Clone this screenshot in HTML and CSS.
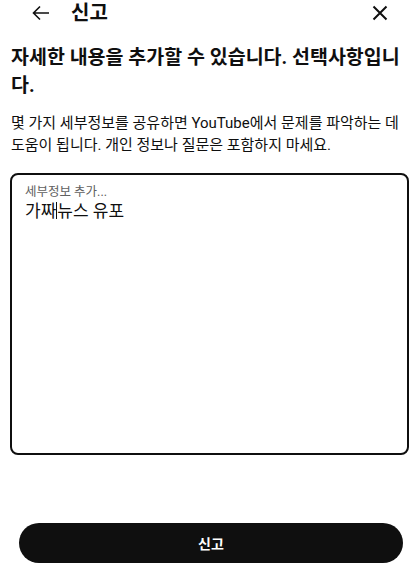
FILE: index.html
```html
<!DOCTYPE html>
<html lang="ko">
<head>
  <meta charset="UTF-8" />
  <title>신고</title>
  <link rel="stylesheet" href="styles.css">
</head>
<body>

  <header class="topbar">
    <button class="icon-btn back" aria-label="뒤로">
      <svg width="20" height="20" viewBox="0 0 20 20" fill="none" stroke="#0f0f0f" stroke-width="1.6">
        <path d="M18 10H2.5M9 3.5L2.5 10L9 16.5" />
      </svg>
    </button>
    <h1 class="title">신고</h1>
    <button class="icon-btn close" aria-label="닫기">
      <svg width="16" height="16" viewBox="0 0 16 16" fill="none" stroke="#0f0f0f" stroke-width="2">
        <path d="M1.5 1.5L14.5 14.5M14.5 1.5L1.5 14.5" />
      </svg>
    </button>
  </header>

  <main class="content">
    <h2 class="heading">자세한 내용을 추가할 수 있습니다. 선택사항입니다.</h2>
    <p class="desc">몇 가지 세부정보를 공유하면 YouTube에서 문제를 파악하는 데 도움이 됩니다. 개인 정보나 질문은 포함하지 마세요.</p>

    <div class="details-box">
      <div class="details-label">세부정보 추가...</div>
      <div class="details-text">가짜<span class="caret"></span>뉴스 유포</div>
    </div>
  </main>

  <footer class="actions">
    <button class="submit">신고</button>
  </footer>

</body>
</html>
```

FILE: styles.css
```css
* {
  box-sizing: border-box;
}

body {
  font-family: Roboto, "Noto Sans CJK KR", sans-serif;
  margin: 0;
  padding: 0;
  background: #fff;
  color: #0f0f0f;
  width: 417px;
  height: 571px;
  overflow: hidden;
}

.topbar {
  display: flex;
  align-items: center;
  height: 26px;
  padding: 0 29px 0 31px;
}

.icon-btn {
  display: flex;
  align-items: center;
  justify-content: center;
  border: none;
  background: none;
  padding: 0;
  cursor: pointer;
}

.title {
  margin: 0 0 0 20px;
  font-size: 20px;
  font-weight: 700;
  line-height: 26px;
  flex: 1;
}

.content {
  padding: 0 8px 0 11px;
}

.heading {
  margin: 18px 0 0;
  font-size: 19.5px;
  font-weight: 700;
  line-height: 28px;
}

.desc {
  margin: 12px 0 0;
  font-size: 15px;
  line-height: 22px;
}

.details-box {
  margin: 17px 0 0 -1px;
  height: 282px;
  border: 2px solid #0f0f0f;
  border-radius: 8px;
  padding: 9px 13px;
}

.details-label {
  font-size: 12.5px;
  line-height: 16px;
  color: #606060;
}

.details-text {
  font-size: 17px;
  line-height: 22px;
}

.caret {
  display: inline-block;
  width: 0;
  height: 17px;
  border-left: 1px solid #0f0f0f;
  vertical-align: -2px;
}

.actions {
  padding: 68px 14px 0 19px;
}

.submit {
  display: block;
  width: 100%;
  height: 40px;
  border: none;
  border-radius: 20px;
  background: #0f0f0f;
  color: #fff;
  font-family: inherit;
  font-size: 14px;
  font-weight: 700;
  cursor: pointer;
}
```
